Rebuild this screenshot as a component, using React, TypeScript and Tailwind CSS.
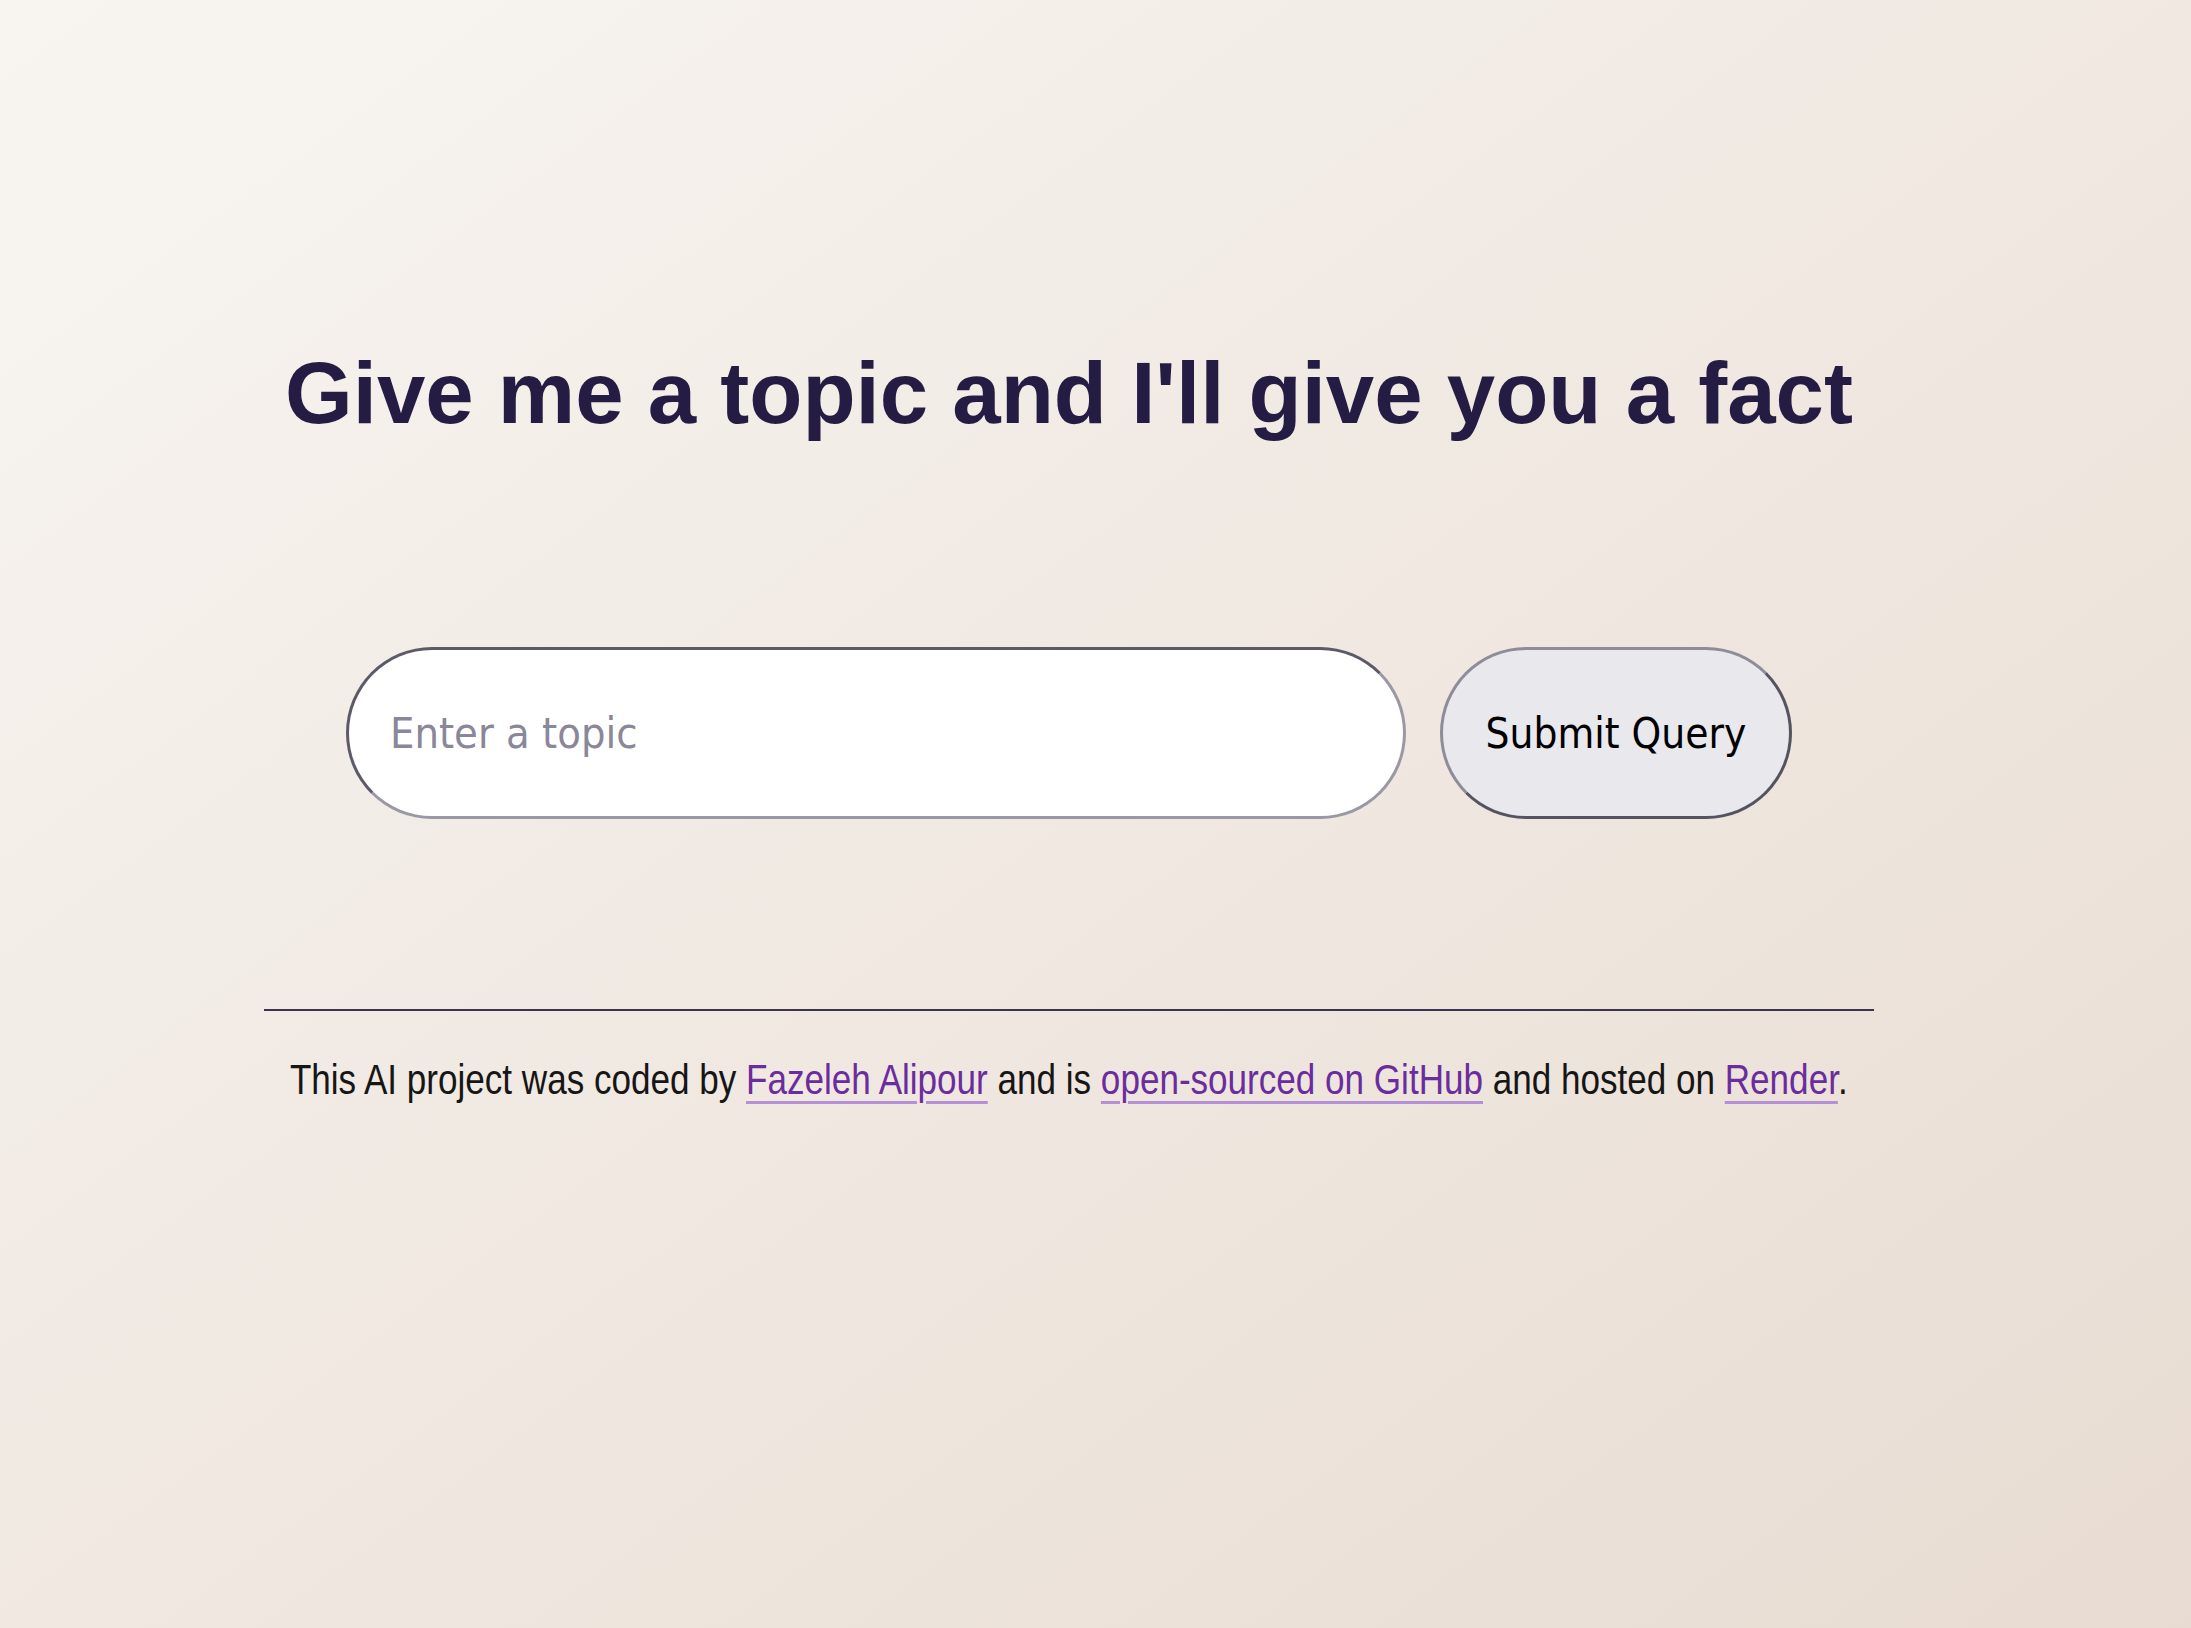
import React, { useState } from 'react';

export default function App() {
  const [topic, setTopic] = useState('');

  const linkClass =
    'text-[#6a2c9e] underline decoration-[#b590d6] decoration-[3px] underline-offset-[7px]';

  return (
    <div className="min-h-screen w-full bg-linear-to-br from-[#f8f5f1] to-[#e8dcd2] font-['Liberation_Sans',Arial,sans-serif]">
      <div className="ml-[264px] w-[1610px] pt-[349px] pb-[200px]">
        {/* Heading */}
        <h1 className="text-center text-[87px] leading-none font-bold text-[#241c43]">
          Give me a topic and I'll give you a fact
        </h1>

        {/* Topic form */}
        <form
          className="mt-[211px] flex justify-center gap-[34px]"
          onSubmit={(e) => e.preventDefault()}
        >
          <input
            type="text"
            value={topic}
            onChange={(e) => setTopic(e.target.value)}
            placeholder="Enter a topic"
            className="w-[1060px] h-[172px] rounded-full border-[3px] border-solid border-t-[#5c5a68] border-l-[#5c5a68] border-b-[#9a98a5] border-r-[#9a98a5] bg-white pl-[41px] pr-6 text-[43px] text-[#222] placeholder:text-[#8a879a] font-['DejaVu_Sans_Condensed','DejaVu_Sans',sans-serif] outline-none"
          />
          <button
            type="submit"
            className="w-[352px] h-[172px] rounded-full border-[3px] border-solid border-t-[#8e8c99] border-l-[#8e8c99] border-b-[#55535f] border-r-[#55535f] bg-[#e9e8ed] text-[42px] text-black font-['DejaVu_Sans_Condensed','DejaVu_Sans',sans-serif]"
          >
            Submit Query
          </button>
        </form>

        <hr className="mt-[190px] border-0 border-t-2 border-[#3b3350]" />

        {/* Footer: narrow face emulated by squeezing Liberation Sans */}
        <div className="mt-[48px] flex justify-center">
          <p className="shrink-0 whitespace-nowrap scale-x-[0.835] text-[42px] leading-none text-[#161616]">
            This AI project was coded by{' '}
            <a href="#" className={linkClass}>
              Fazeleh Alipour
            </a>{' '}
            and is{' '}
            <a href="#" className={linkClass}>
              open-sourced on GitHub
            </a>{' '}
            and hosted on{' '}
            <a href="#" className={linkClass}>
              Render
            </a>
            .
          </p>
        </div>
      </div>
    </div>
  );
}
